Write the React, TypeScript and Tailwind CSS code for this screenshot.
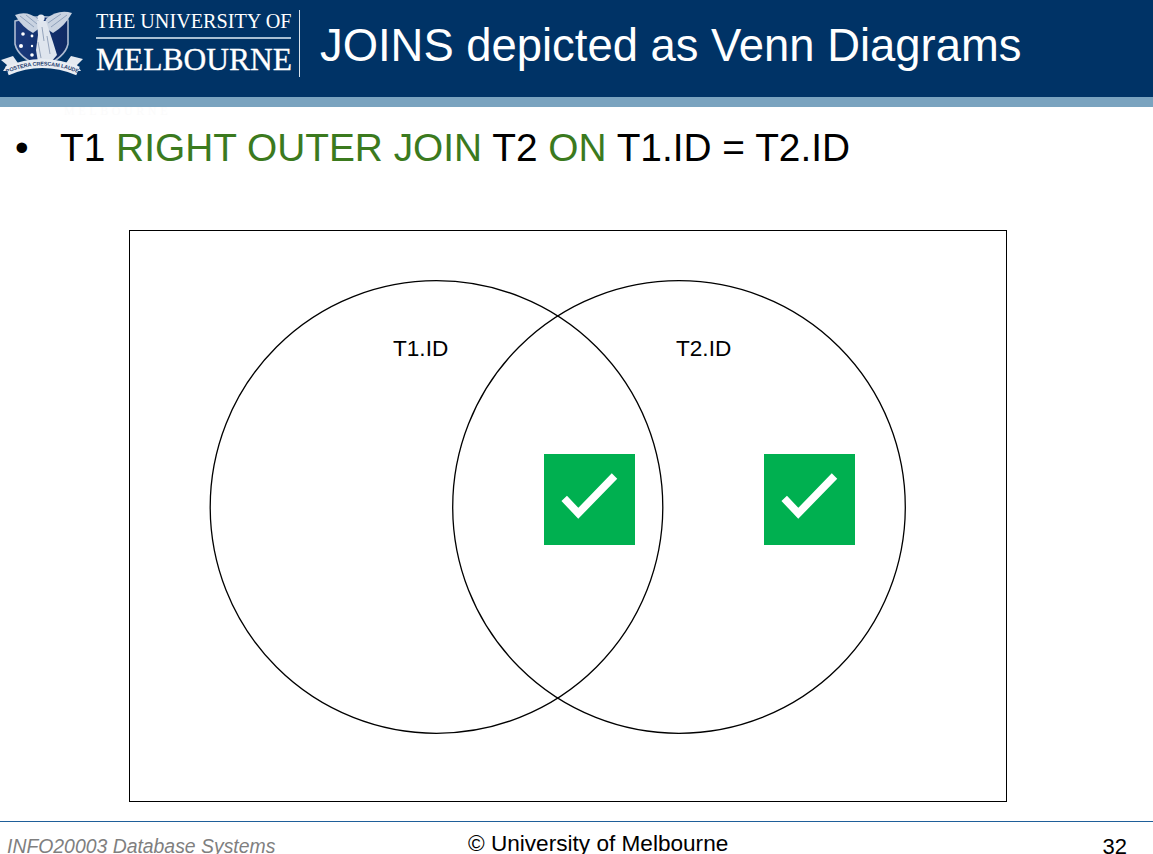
const Check = () => (
  <div className="w-[91px] h-[91px] bg-[#00b050] flex items-center justify-center">
    <svg width="91" height="91" viewBox="0 0 91 91">
      <path d="M20.2 44.3 L34.3 59.3 L70.5 22" fill="none" stroke="#fff" strokeWidth="7.6" />
    </svg>
  </div>
);

const Crest = () => (
  <svg width="84" height="72" viewBox="0 5 84 72" className="shrink-0">
    <defs>
      <linearGradient id="sh" x1="0" y1="0" x2="1" y2="0">
        <stop offset="0" stopColor="#1a3a7c" />
        <stop offset="1" stopColor="#0f2a63" />
      </linearGradient>
    </defs>
    <path d="M15 21 Q42 13 68 20 L68 44 Q65 58 42 67 Q18 58 15 44 Z" fill="url(#sh)" stroke="#aebcd1" strokeWidth="1.6" />
    <path d="M15 15 Q27 10 38 19 L41 27 L33 33 Q22 27 15 15 Z" fill="#c9d3e1" />
    <path d="M72 13 Q58 9 46 19 L44 27 L53 33 Q65 26 72 13 Z" fill="#c9d3e1" />
    <path d="M20 16 L34 27 M26 15 L37 24 M67 15 L51 27 M61 14 L48 23" stroke="#7f93b0" strokeWidth="0.8" />
    <path d="M37 21 h9 l3 9 l4 12 l4 13 l-6 7 h-13 l-2 -12 l2 -15 Z" fill="#dfe5ee" />
    <path d="M42 27 l2 14 M47 36 l3 18 M38 42 l3 16" stroke="#8c9cb5" strokeWidth="0.9" />
    <circle cx="41" cy="18" r="3.6" fill="#e6ebf2" />
    <circle cx="23" cy="34" r="1.8" fill="#fff" />
    <circle cx="32" cy="36" r="1.4" fill="#fff" />
    <circle cx="21" cy="46" r="2" fill="#fff" />
    <circle cx="32" cy="46" r="1.2" fill="#fff" />
    <circle cx="32" cy="55" r="1.8" fill="#fff" />
    <path d="M1 60 L13 56 L20 66 L9 71 L3 71 L7 65 Z" fill="#e4e9f0" />
    <path d="M83 59 L71 56 L64 66 L75 71 L81 71 L77 65 Z" fill="#e4e9f0" />
    <path id="ribbon" d="M7 71 Q42 56 78 71" fill="none" stroke="#e9edf3" strokeWidth="9" />
    <text fontFamily="Liberation Sans, sans-serif" fontSize="5.4" fill="#27406f" fontWeight="700">
      <textPath href="#ribbon" startOffset="50%" textAnchor="middle" dominantBaseline="central">POSTERA CRESCAM LAUDE</textPath>
    </text>
  </svg>
);

export default function App() {
  return (
    <div className="relative w-[1153px] h-[854px] overflow-hidden bg-white flex flex-col font-['Liberation_Sans',Arial,sans-serif] text-black">
      <header className="h-[97px] shrink-0 bg-[#003366] flex items-start">
        <div className="pt-[5px]"><Crest /></div>
        <div className="ml-[12px] mt-[9px] w-[200px] font-['Liberation_Serif',serif] text-white">
          <div className="text-[20.2px] leading-[24px] whitespace-nowrap">THE UNIVERSITY OF</div>
          <div className="h-[2px] bg-[#a9c0d4] mt-[4px] mb-[4px] w-[195px]" />
          <div className="text-[31.5px] leading-[34px] whitespace-nowrap [-webkit-text-stroke:0.3px_white]">MELBOURNE</div>
        </div>
        <div className="w-px h-[67px] bg-[#d8e2ec] mt-[10px] ml-[3px]" />
        <h1 className="ml-[20px] mt-[19px] text-[45.4px] leading-[54px] text-white whitespace-nowrap">JOINS depicted as Venn Diagrams</h1>
      </header>
      <div className="h-[10px] shrink-0 bg-[#7aa3bf]" />
      <div className="absolute left-[64px] top-[104px] font-['Liberation_Serif',serif] text-[12px] leading-[14px] tracking-[3.6px] text-[#fbfbfb]">MELBOURNE</div>
      <div className="flex items-center h-[46px] mt-[18px] text-[38.85px] leading-[46px] whitespace-nowrap">
        <span className="w-[60px] pl-[15px]">•</span>
        <span>T1 <span className="text-[#3b7a1e]">RIGHT OUTER JOIN</span> T2 <span className="text-[#3b7a1e]">ON</span> T1.ID = T2.ID</span>
      </div>
      <div className="relative ml-[129px] mt-[59px] w-[878px] h-[572px] border border-black shrink-0">
        <svg className="absolute left-0 top-0" width="876" height="570" viewBox="0 0 876 570">
          <circle cx="306.5" cy="276" r="226.3" fill="none" stroke="#000" strokeWidth="1.3" />
          <circle cx="549" cy="276" r="226.3" fill="none" stroke="#000" strokeWidth="1.3" />
        </svg>
        <span className="absolute left-[263px] top-[105px] text-[22.6px] leading-[26px]">T1.ID</span>
        <span className="absolute left-[546px] top-[105px] text-[22.6px] leading-[26px]">T2.ID</span>
        <div className="absolute left-[414px] top-[223px]"><Check /></div>
        <div className="absolute left-[634px] top-[223px]"><Check /></div>
      </div>
      <footer className="mt-[19px] border-t border-[#1f5f99] h-[33px] shrink-0 relative flex items-start justify-between">
        <span className="pl-[7px] mt-[13px] italic text-[19.4px] leading-[22px] text-[#7f7f7f] whitespace-nowrap">INFO20003 Database Systems</span>
        <span className="mt-[10px] text-[22.6px] leading-[24px] whitespace-nowrap absolute left-[468px]">© University of Melbourne</span>
        <span className="mr-[26px] mt-[12px] text-[22px] leading-[25px]">32</span>
      </footer>
    </div>
  );
}
